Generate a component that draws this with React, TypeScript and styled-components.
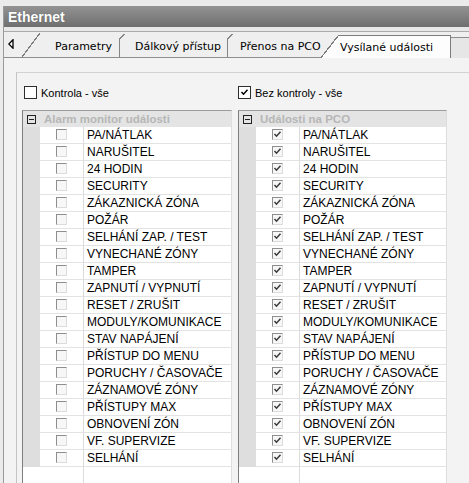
import React from 'react';
import styled, { createGlobalStyle } from 'styled-components';

const GlobalStyle = createGlobalStyle`
  html, body { margin: 0; padding: 0; background: #ebebeb; }
  body { width: 469px; height: 483px; overflow: hidden; font-family: "Liberation Sans", Arial, sans-serif; }
  #root { height: 483px; }
`;

const TopStrip = styled.div`
  height: 6px;
  background: #ebebeb;
`;

const Window = styled.div`
  margin-left: 3px;
  border-left: 1px solid #9a9a9a;
  height: 477px;
  display: flex;
  flex-direction: column;
  background: #f2f2f2;
`;

const TitleBar = styled.div`
  height: 21px;
  background: linear-gradient(#939393, #6f6f6f);
  color: #fff;
  font: bold 14px "Liberation Sans", Arial, sans-serif;
  display: flex;
  align-items: center;
  padding-left: 4px;
  text-shadow: 0 0 1px rgba(0, 0, 0, 0.35);
`;

const TitleGap = styled.div`
  height: 4px;
  background: #e8e8e8;
  border-bottom: 1px solid #ababab;
`;

const TabStrip = styled.div`
  height: 26px;
  display: flex;
  background: #efefef;
  box-shadow: inset 0 -1px 0 #8e8e8e;
  font: 11px "DejaVu Sans", Verdana, sans-serif;
  color: #000;
`;

const ArrowCell = styled.div`
  width: 14px;
  padding-left: 4px;
  display: flex;
  align-items: center;
  padding-bottom: 2px;
`;

const Slant = styled.div<{ $active?: boolean }>`
  width: 18px;
  flex: none;
  margin-top: ${(p) => (p.$active ? 3 : 1)}px;
  height: ${(p) => (p.$active ? 23 : 24)}px;
  background: ${(p) =>
    p.$active
      ? 'linear-gradient(to bottom right, transparent calc(50% - 0.8px), #7c7c7c calc(50% - 0.8px), #7c7c7c calc(50% + 0.4px), #fdfdfd calc(50% + 0.4px))'
      : 'linear-gradient(to bottom right, transparent calc(50% - 0.6px), #7c7c7c calc(50% - 0.6px), #7c7c7c calc(50% + 0.6px), transparent calc(50% + 0.6px))'};
`;

const Tab = styled.div<{ $w: number; $pl: number; $sep?: boolean }>`
  position: relative;
  width: ${(p) => p.$w}px;
  padding-left: ${(p) => p.$pl}px;
  box-sizing: border-box;
  flex: none;
  display: flex;
  align-items: center;
  padding-top: 3px;
  white-space: nowrap;
  &::after {
    content: '';
    display: ${(p) => (p.$sep ? 'block' : 'none')};
    position: absolute;
    right: 0;
    top: 6px;
    bottom: 1px;
    width: 1px;
    background: #858585;
  }
  &::before {
    content: '';
    display: ${(p) => (p.$sep ? 'block' : 'none')};
    position: absolute;
    right: -5px;
    top: 2px;
    width: 6px;
    height: 5px;
    background: linear-gradient(to bottom right, transparent calc(50% - 0.6px), #858585 calc(50% - 0.6px), #858585 calc(50% + 0.6px), transparent calc(50% + 0.6px));
  }
`;

const ActiveTab = styled.div`
  width: 112px;
  flex: none;
  box-sizing: border-box;
  margin-top: 3px;
  height: 23px;
  background: #fdfdfd;
  border-top: 1px solid #7c7c7c;
  border-right: 1px solid #7c7c7c;
  display: flex;
  align-items: center;
  padding-left: 1px;
  white-space: nowrap;
`;

const RestTab = styled.div`
  flex: 1;
  margin-top: 5px;
  height: 20px;
  background: #e6e6e6;
  border-top: 1px solid #8e8e8e;
  border-bottom: 1px solid #8e8e8e;
`;

const Content = styled.div`
  flex: 1;
  min-height: 0;
  background: #f3f3f3;
  padding: 14px 0 0 12px;
  display: flex;
`;

const GroupBox = styled.div`
  flex: 1;
  border-top: 1px solid #d2d2d2;
  border-left: 1px solid #c4c4c4;
  padding: 13px 0 0 5px;
  display: grid;
  grid-template-columns: 210px 209px;
  column-gap: 6px;
`;

const Column = styled.div`
  display: flex;
  flex-direction: column;
  min-height: 0;
`;

const CheckLine = styled.label<{ $indent: number }>`
  display: flex;
  align-items: center;
  gap: 4px;
  height: 13px;
  margin: 0 0 11px ${(p) => p.$indent}px;
  font-size: 11px;
  color: #000;
`;

const BigBox = styled.span`
  width: 11px;
  height: 11px;
  border: 1px solid #2e2e2e;
  background: #fff;
  display: flex;
  align-items: center;
  justify-content: center;
`;

const Tree = styled.div`
  flex: 1;
  display: flex;
  flex-direction: column;
  background: #fff;
  border-top: 1px solid #9c9c9c;
  border-left: 1px solid #7e7e7e;
  border-right: 1px solid #dedede;
`;

const Header = styled.div`
  height: 16px;
  background: #e4e4e4;
  display: flex;
  align-items: center;
  padding-left: 4px;
  gap: 8px;
`;

const Collapse = styled.span`
  width: 7px;
  height: 7px;
  border: 1px solid #222;
  position: relative;
  &::after {
    content: '';
    position: absolute;
    left: 1px;
    right: 1px;
    top: 3px;
    height: 1px;
    background: #222;
  }
`;

const HeaderText = styled.span`
  font: bold 11.5px "Liberation Sans", Arial, sans-serif;
  color: #b6b6b6;
`;

const Row = styled.div`
  display: grid;
  grid-template-columns: 17px 44px 1fr;
  height: 17px;
`;

const Filler = styled(Row)`
  flex: 1;
  height: auto;
`;

const Gutter = styled.div<{ $empty?: boolean }>`
  background: ${(p) => (p.$empty ? '#fff' : '#dedede')};
`;

const CheckCell = styled.div<{ $empty?: boolean }>`
  box-sizing: border-box;
  border-right: 1px solid #dcdcdc;
  border-bottom: ${(p) => (p.$empty ? 'none' : '1px solid #e3e3e3')};
  display: flex;
  align-items: center;
  justify-content: center;
`;

const LabelCell = styled.div<{ $empty?: boolean }>`
  box-sizing: border-box;
  border-bottom: ${(p) => (p.$empty ? 'none' : '1px solid #e3e3e3')};
  display: flex;
  align-items: center;
  padding-left: 3px;
  font-size: 12px;
  color: #000;
  white-space: nowrap;
  overflow: hidden;
`;

const SmallBox = styled.span`
  width: 9px;
  height: 9px;
  border-style: solid;
  border-width: 1px;
  border-color: #8e8e8e #dcdcdc #dcdcdc #8e8e8e;
  background: #f7f7f7;
  display: flex;
  align-items: center;
  justify-content: center;
  margin-top: -1px;
`;

const Check: React.FC<{ color: string }> = ({ color }) => (
  <svg width="9" height="9" viewBox="0 0 9 9">
    <polyline points="1.5,4 3.5,6.2 7.5,1.8" fill="none" stroke={color} strokeWidth="1.5" />
  </svg>
);

const items = [
  'PA/NÁTLAK',
  'NARUŠITEL',
  '24 HODIN',
  'SECURITY',
  'ZÁKAZNICKÁ ZÓNA',
  'POŽÁR',
  'SELHÁNÍ ZAP. / TEST',
  'VYNECHANÉ ZÓNY',
  'TAMPER',
  'ZAPNUTÍ / VYPNUTÍ',
  'RESET / ZRUŠIT',
  'MODULY/KOMUNIKACE',
  'STAV NAPÁJENÍ',
  'PŘÍSTUP DO MENU',
  'PORUCHY / ČASOVAČE',
  'ZÁZNAMOVÉ ZÓNY',
  'PŘÍSTUPY MAX',
  'OBNOVENÍ ZÓN',
  'VF. SUPERVIZE',
  'SELHÁNÍ',
];

const Panel: React.FC<{ label: string; title: string; checked: boolean; indent: number }> = ({
  label,
  title,
  checked,
  indent,
}) => (
  <Column>
    <CheckLine $indent={indent}>
      <BigBox>{checked && <Check color="#000" />}</BigBox>
      {label}
    </CheckLine>
    <Tree>
      <Header>
        <Collapse />
        <HeaderText>{title}</HeaderText>
      </Header>
      {items.map((it) => (
        <Row key={it}>
          <Gutter />
          <CheckCell>
            <SmallBox>{checked && <Check color="#3a3a3a" />}</SmallBox>
          </CheckCell>
          <LabelCell>{it}</LabelCell>
        </Row>
      ))}
      <Filler>
        <Gutter $empty />
        <CheckCell $empty />
        <LabelCell $empty />
      </Filler>
    </Tree>
  </Column>
);

export default function App() {
  return (
    <>
      <GlobalStyle />
      <TopStrip />
      <Window>
        <TitleBar>Ethernet</TitleBar>
        <TitleGap />
        <TabStrip>
          <ArrowCell>
            <svg width="6" height="10" viewBox="0 0 6 10">
              <polygon points="5,0.8 0.8,5 5,9.2" fill="#fff" stroke="#000" strokeWidth="1.3" />
            </svg>
          </ArrowCell>
          <Slant />
          <Tab $w={80} $pl={15} $sep>
            Parametry
          </Tab>
          <Tab $w={108} $pl={15} $sep>
            Dálkový přístup
          </Tab>
          <Tab $w={93} $pl={12}>
            Přenos na PCO
          </Tab>
          <Slant $active />
          <ActiveTab>Vysílané události</ActiveTab>
          <RestTab />
        </TabStrip>
        <Content>
          <GroupBox>
            <Panel label="Kontrola - vše" title="Alarm monitor události" checked={false} indent={2} />
            <Panel label="Bez kontroly - vše" title="Události na PCO" checked indent={0} />
          </GroupBox>
        </Content>
      </Window>
    </>
  );
}
